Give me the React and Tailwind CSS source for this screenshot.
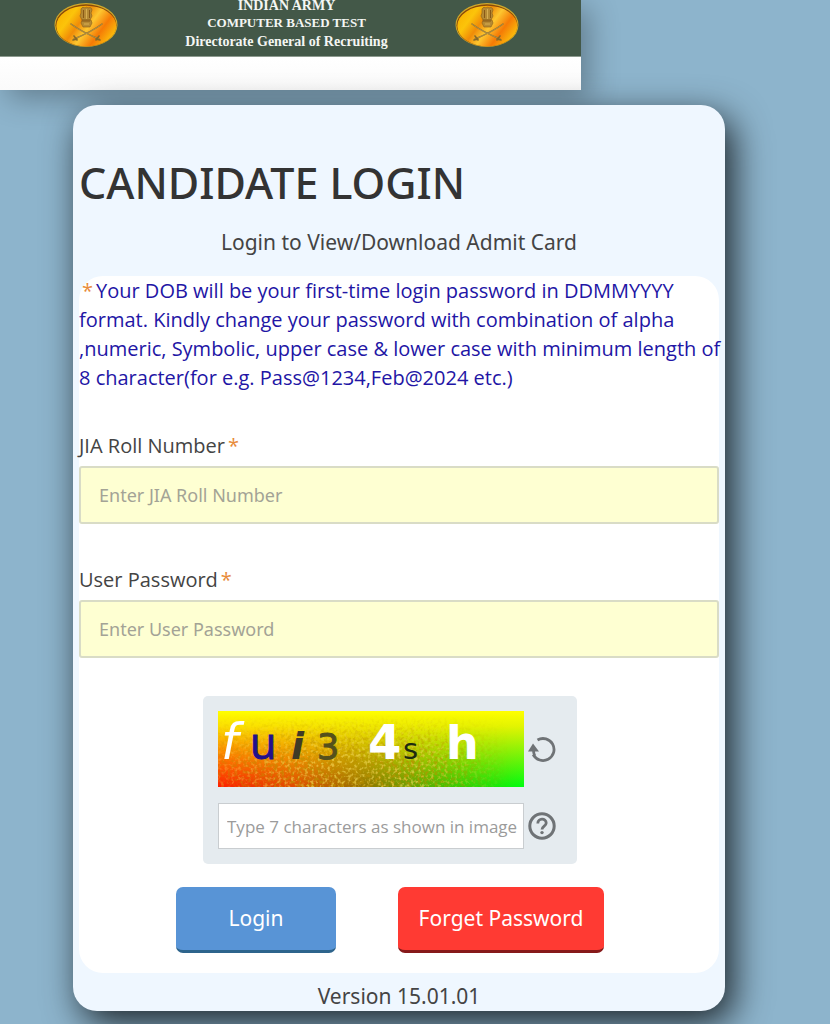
import { useState } from "react"

/* Gold oval crest with the lion capital and crossed swords */
const Crest = ({ id }) => (
  <svg viewBox="0 0 64 46" className="h-[46px] w-16 shrink-0" aria-hidden="true">
    <defs>
      <linearGradient id={id} x1="0" y1="0.2" x2="1" y2="0.7">
        <stop offset="0" stopColor="#f9b000" />
        <stop offset="0.22" stopColor="#fcc40a" />
        <stop offset="0.4" stopColor="#f08c08" />
        <stop offset="0.56" stopColor="#fdc62f" />
        <stop offset="0.76" stopColor="#f57a06" />
        <stop offset="1" stopColor="#fcc40c" />
      </linearGradient>
    </defs>
    <ellipse cx="32" cy="23" rx="31.5" ry="22" fill="#d0a92a" />
    <ellipse cx="32" cy="23.3" rx="30.5" ry="21" fill="#8a4a08" />
    <ellipse cx="32.3" cy="24" rx="30" ry="20.3" fill={`url(#${id})`} />
    <g fill="#b58a34" stroke="#8a5c1a" strokeWidth="0.6">
      <path d="M27 7c1-2 3-2 4-1 1-1 2-1 3 0 2-1 4 0 4 2l-1 3 1 3-2 4h-8l-2-4 1-3z" />
      <path d="M28 18h9l1 3-2 4h-7l-2-4z" />
    </g>
    <path
      d="M29.500 8v8M35.500 8v8M28 19h8"
      stroke="#7d4d12"
      strokeWidth="0.8"
      fill="none"
    />
    <path d="M32.500 7v10M30 22h5" stroke="#e0b65a" strokeWidth="0.8" fill="none" />
    <g fill="none" strokeLinecap="round">
      <path d="M17 22c8 6 16 10 28 15M48 22c-8 6-16 10-28 15" stroke="#8f6c2a" strokeWidth="1.500" />
      <path d="M17 22c8 6 16 10 28 15M48 22c-8 6-16 10-28 15" stroke="#c5a650" strokeWidth="0.6" />
      <path d="M20 34l3 4M19 38l4-1M45 34l-3 4M46 38l-4-1" stroke="#86692a" strokeWidth="1.600" />
    </g>
  </svg>
)

const Header = () => (
  <header className="w-[70%] bg-white shadow-[8px_8px_28px_rgba(0,0,0,0.3)]">
    <div className="flex h-[57px] items-start justify-between overflow-hidden border-b border-[#8d9a8f] bg-[#435848] pt-0.5 pl-[54px] pr-[62px]">
      <Crest id="crest-left" />
      <div className="-mt-1 text-center font-['Liberation_Serif',serif] text-sm font-bold text-[#f4f6f3]">
        <p className="leading-4">INDIAN ARMY</p>
        <p className="text-[13px] leading-[17px]">COMPUTER BASED TEST</p>
        <p className="leading-[22px]">Directorate General of Recruiting</p>
      </div>
      <Crest id="crest-right" />
    </div>
    <div className="h-[33px] bg-gradient-to-b from-white to-[#fafafa]" />
  </header>
)

const Required = () => <span className="mx-[3px] text-[#e88b3a]">*</span>

const Field = ({ id, label, type, placeholder }) => {
  const [value, setValue] = useState("")

  return (
    <div className="flex flex-col gap-1.5">
      <label htmlFor={id} className="font-['Open_Sans',sans-serif] text-xl leading-7 text-[#444]">
        {label}
        <Required />
      </label>
      <input
        id={id}
        type={type}
        value={value}
        onChange={(e) => setValue(e.target.value)}
        placeholder={placeholder}
        className="h-[58px] w-full rounded-[3px] border-2 border-[#d9dcc6] bg-[#feffd2] px-[18px] text-lg text-[#444] placeholder:text-[#a3a396]"
      />
    </div>
  )
}

const CaptchaImage = () => (
  <svg viewBox="0 0 306 76" className="h-[76px] w-[306px] font-['DejaVu_Sans',sans-serif]" role="img" aria-label="Captcha">
    <defs>
      <linearGradient id="cap-base" x1="0" x2="1">
        <stop offset="0" stopColor="#ff1e00" />
        <stop offset="0.25" stopColor="#e04a00" />
        <stop offset="0.5" stopColor="#8a7a00" />
        <stop offset="0.75" stopColor="#3fc400" />
        <stop offset="1" stopColor="#00ff10" />
      </linearGradient>
      <linearGradient id="cap-top" x1="0" y1="0" x2="0" y2="1">
        <stop offset="0" stopColor="#ffff00" />
        <stop offset="0.2" stopColor="#fbf400" stopOpacity="0.9" />
        <stop offset="1" stopColor="#ffe000" stopOpacity="0" />
      </linearGradient>
      <linearGradient id="cap-fade" x1="0" y1="0" x2="0" y2="1">
        <stop offset="0.05" stopColor="#000" />
        <stop offset="0.6" stopColor="#fff" />
      </linearGradient>
      <linearGradient id="cap-side" x1="0" x2="1">
        <stop offset="0" stopColor="#000" stopOpacity="0.6" />
        <stop offset="0.3" stopColor="#000" stopOpacity="0" />
        <stop offset="0.65" stopColor="#000" stopOpacity="0" />
        <stop offset="0.95" stopColor="#000" />
      </linearGradient>
      <mask id="cap-mask">
        <rect width="306" height="76" fill="url(#cap-fade)" />
        <rect width="306" height="76" fill="url(#cap-side)" />
      </mask>
      <filter id="cap-dark" x="0" y="0" width="100%" height="100%">
        <feTurbulence type="fractalNoise" baseFrequency="0.3" numOctaves="2" seed="4" />
        <feColorMatrix values="0 0 0 0 0.5  0 0 0 0 0.28  0 0 0 0 0  4 0 0 0 -1.8" />
      </filter>
      <filter id="cap-light" x="0" y="0" width="100%" height="100%">
        <feTurbulence type="fractalNoise" baseFrequency="0.3" numOctaves="2" seed="11" />
        <feColorMatrix values="0 0 0 0 0.9  0 0 0 0 0.7  0 0 0 0 0.1  0 4 0 0 -2" />
      </filter>
    </defs>
    <rect width="306" height="76" fill="url(#cap-base)" />
    <rect width="306" height="76" fill="url(#cap-top)" />
    <g mask="url(#cap-mask)">
      <rect width="306" height="76" filter="url(#cap-dark)" opacity="0.7" />
      <rect width="306" height="76" filter="url(#cap-light)" opacity="0.6" />
    </g>
    <text x="3" y="48" fontSize="49" fontStyle="italic" fill="#fff">f</text>
    <text x="32" y="48" fontSize="43" fill="#22108c" stroke="#22108c" className="font-['Open_Sans',sans-serif]">u</text>
    <text x="73" y="48" fontSize="38" fontWeight="bold" fontStyle="italic" fill="#3f3a26">i</text>
    <text x="99" y="48" fontSize="35" fill="#55501c" stroke="#55501c">3</text>
    <text x="150" y="48" fontSize="48" fontWeight="bold" fill="#fff">4</text>
    <text x="185" y="48" fontSize="29" fill="#1e2a10">s</text>
    <text x="228" y="48" fontSize="46" fontWeight="bold" fill="#fff">h</text>
  </svg>
)

const ReloadIcon = () => (
  <svg viewBox="0 0 28 28" className="size-7" aria-hidden="true">
    <path d="M9.500 5A11 11 0 1 1 5.200 19.500" fill="none" stroke="#6f7376" strokeWidth="2.800" />
    <path d="M0 16.500 5 8.500l6 8z" fill="#6f7376" />
    <path d="M5.500 15c0 2 0 3.500 1.200 5.500" fill="none" stroke="#6f7376" strokeWidth="2.800" />
  </svg>
)

const HelpIcon = () => (
  <svg viewBox="0 0 28 28" className="size-7" fill="none" stroke="#6f7376" aria-hidden="true">
    <circle cx="14" cy="14" r="12.200" strokeWidth="3" />
    <path d="M9.800 11.500c0-5.600 8.400-5.600 8.400-.6 0 3.100-4.200 3.300-4.200 6.600" strokeWidth="2.800" />
    <circle cx="14" cy="20.600" r="1.700" fill="#6f7376" stroke="none" />
  </svg>
)

const Captcha = () => (
  <div className="mx-auto w-[374px] max-w-full rounded-[5px] bg-[#e5ebef] p-[15px]">
    <div className="flex items-center gap-1">
      <CaptchaImage />
      <button type="button" aria-label="Reload captcha"><ReloadIcon /></button>
    </div>
    <div className="mt-4 flex items-center gap-1">
      <input
        type="text"
        aria-label="Captcha text"
        placeholder="Type 7 characters as shown in image"
        className="h-[46px] w-[306px] border border-[#c9cdd0] bg-white pl-2 font-['Open_Sans',sans-serif] text-[17px] text-[#444] placeholder:text-[#9b9b9b]"
      />
      <button type="button" aria-label="Captcha help"><HelpIcon /></button>
    </div>
  </div>
)

const LoginCard = () => (
  <main className="mt-[15px] ml-[73px] mr-[105px] rounded-3xl bg-[#eff7ff] px-1.5 pt-12 text-[#444] shadow-[8px_12px_36px_rgba(0,0,0,0.8)]">
    <h1 className="text-[43px] leading-[60px] font-medium text-[#333]">CANDIDATE LOGIN</h1>
    <p className="mt-3 text-center text-[21px] leading-[34px]">Login to View/Download Admit Card</p>

    <form className="mt-[17px] rounded-3xl bg-white pb-5" onSubmit={(e) => e.preventDefault()}>
      <p className="-mr-1 font-['Open_Sans',sans-serif] text-xl leading-[29px] text-[#2215a5]">
        <Required />
        Your DOB will be your first-time login password in DDMMYYYY format. Kindly change your
        password with combination of alpha ,numeric, Symbolic, upper case &amp; lower case with
        minimum length of 8 character(for e.g. Pass@1234,Feb@2024 etc.)
      </p>

      <div className="mt-10 flex flex-col gap-[42px]">
        <Field id="roll" label="JIA Roll Number" type="text" placeholder="Enter JIA Roll Number" />
        <Field id="password" label="User Password" type="password" placeholder="Enter User Password" />
      </div>

      <div className="mt-[38px] pr-[18px]">
        <Captcha />
      </div>

      <div className="mt-[23px] flex justify-center gap-[62px] pr-[18px] text-[21px] text-white">
        <button type="submit" className="h-[66px] w-40 rounded-[7px] border-b-[3px] border-[#2d648c] bg-[#5894d6]">
          Login
        </button>
        <button type="button" className="h-[66px] w-[206px] rounded-[7px] border-b-[3px] border-[#86191a] bg-[#ff3a33]">
          Forget Password
        </button>
      </div>
    </form>

    <p className="pt-2 text-center text-[21px] leading-[30px]">Version 15.01.01</p>
  </main>
)

const App = () => (
  <div className="min-h-screen overflow-hidden bg-[#8db4cc] pb-[13px] font-['Noto_Sans',sans-serif]">
    <Header />
    <LoginCard />
  </div>
)

export default App
